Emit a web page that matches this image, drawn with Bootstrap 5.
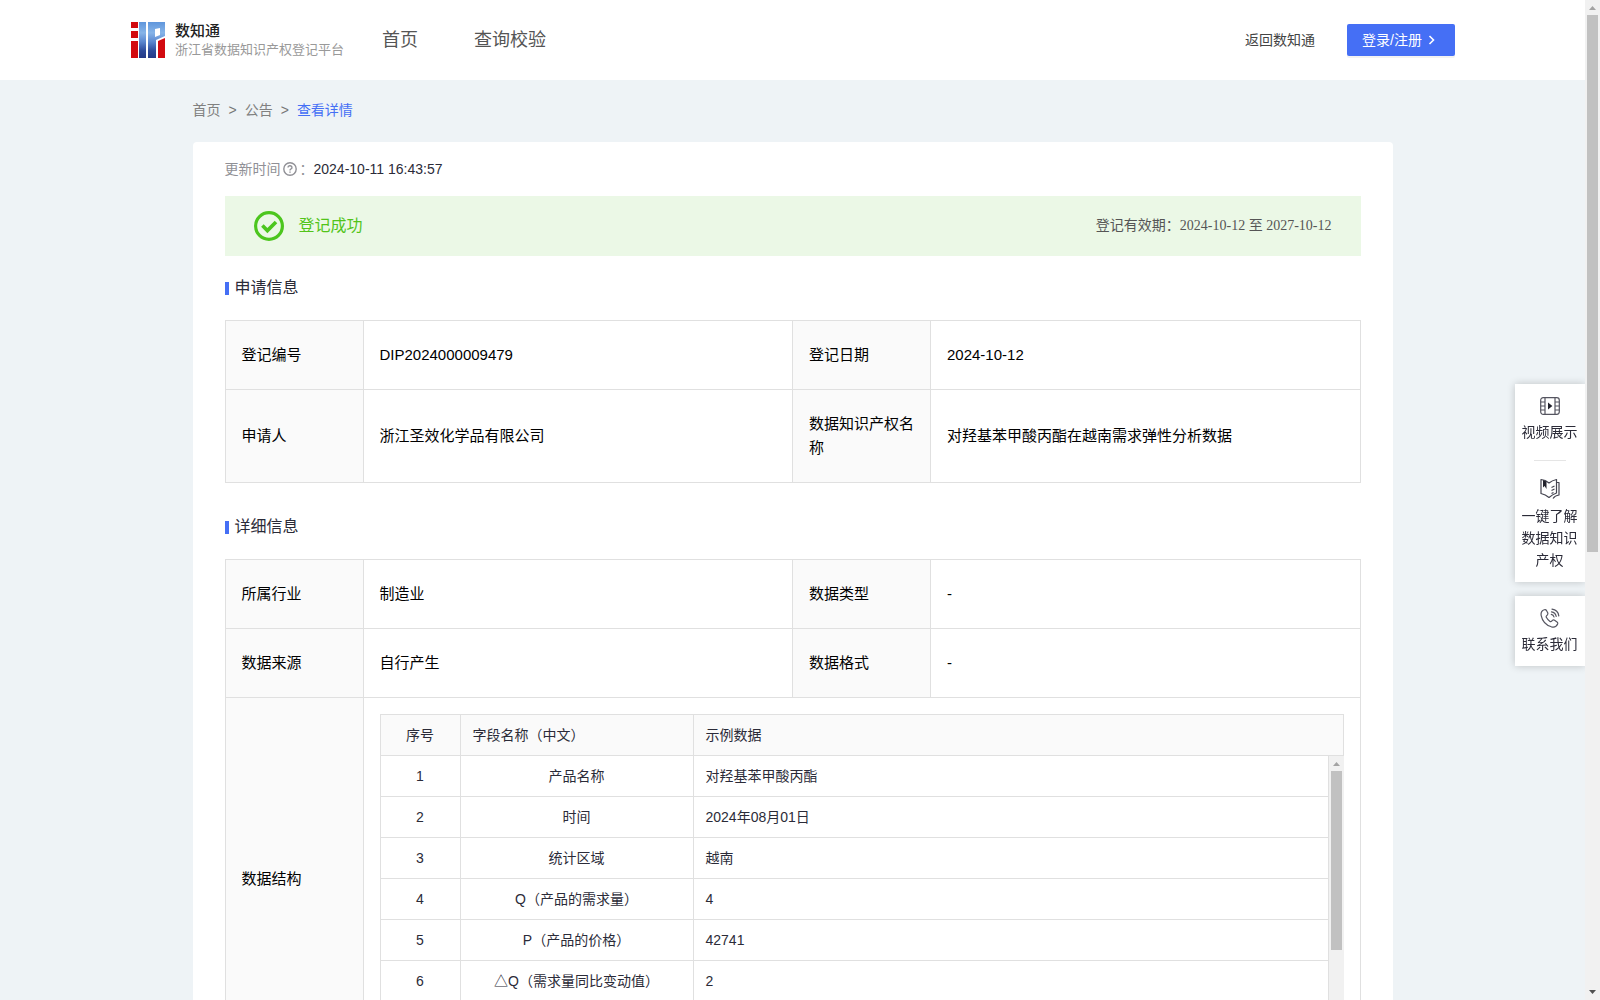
<!DOCTYPE html>
<html lang="zh-CN">
<head>
<meta charset="utf-8">
<meta name="viewport" content="width=device-width, initial-scale=1">
<title>数知通 - 浙江省数据知识产权登记平台</title>
<link href="https://cdn.jsdelivr.net/npm/bootstrap@5.3.0/dist/css/bootstrap.min.css" rel="stylesheet">
<style>
  :root { --brand: #456ff5; --line: #e0e0e0; --ink: #2b2b38; }
  body { font-family: "Liberation Sans", "Noto Sans CJK SC", sans-serif; font-size: 14px; line-height: 22px; color: var(--ink); background: #eef3f6; }
  a { text-decoration: none; }
  .page-pane { min-width: 0; }
  .site-header { height: 80px; padding: 0 130px; }
  .brand-text { margin-left: 9px; }
  .brand-name { font-size: 15px; line-height: 20px; color: #222; font-weight: 500; }
  .brand-sub { font-size: 13px; line-height: 18px; color: #999; }
  .site-nav { gap: 56px; margin-left: 38px; }
  .site-nav a { font-size: 18px; color: #555; }
  .back-link { color: #444; }
  .btn-login { height: 32px; padding: 0 19px 0 15px; gap: 6px; background: var(--brand); color: #fff; font-size: 14px; line-height: 22px; border: 0; border-radius: 2px; box-shadow: 0 2px 0 rgba(0,0,0,.05); }
  .btn-login:hover { background: #3560e8; color: #fff; }
  .content-wrap { max-width: 1200px; }
  .crumbs { --bs-breadcrumb-divider: '>'; --bs-breadcrumb-item-padding-x: 8px; --bs-breadcrumb-divider-color: #777; font-size: 14px; padding: 19px 0 21px; }
  .crumbs a { color: #808080; }
  .crumbs .active { color: var(--brand); }
  .detail-sheet { border-radius: 4px; padding: 16px 32px; }
  .muted-label { color: #909096; }
  .help-icon { margin: 0 3px 0 2px; }
  .result-bar { height: 60px; margin-top: 16px; padding: 0 29px; background: #ebf8e6; }
  .result-text { font-size: 16px; color: #52c41a; margin-left: 15px; }
  .valid-text { color: #555; font-family: "Liberation Serif", "Noto Sans CJK SC", serif; }
  .sect-title { font-size: 16px; line-height: 24px; margin: 20px 0; font-weight: 400; gap: 6px; }
  .sect-title::before { content: ""; width: 4px; height: 13px; background: var(--brand); }
  .info-table { width: 100%; table-layout: fixed; border-collapse: collapse; margin-bottom: 32px; font-size: 15px; line-height: 24px; color: #000; }
  .info-table > tbody > tr > th, .info-table > tbody > tr > td { border: 1px solid var(--line); padding: 22px 16px; vertical-align: middle; font-weight: 400; }
  .info-table > tbody > tr > th { background: #fafafa; }
  .info-table > tbody > tr > td.nest-cell { padding: 16px; }
  .key-col { width: 138px; }
  .field-table { width: 100%; table-layout: fixed; border-collapse: collapse; font-size: 14px; line-height: 22px; color: var(--ink); }
  .field-table th, .field-table td { border: 1px solid var(--line); padding: 9px 12px; font-weight: 400; }
  .field-table th { background: #fafafa; }
  .field-body { height: 288px; }
  .field-body tr:first-child td { border-top: 0; }
  .no-col { width: 80px; }
  .name-col { width: 233px; }
  .bar-track { width: 15px; background: #f1f1f1; padding: 6px 2px; flex: none; }
  .bar-thumb { background: #c1c1c1; margin-top: 5px; }
  .page-thumb { height: 537px; }
  .field-thumb { height: 179px; }
  .bar-track svg { display: block; margin: 0 auto; }
  .side-dock { position: fixed; right: 15px; top: 384px; width: 70px; display: flex; flex-direction: column; gap: 14px; clip-path: inset(-12px 0 -12px -12px); }
  .dock-box { background: #fff; box-shadow: 0 0 8px rgba(0,0,0,.2); padding: 12px 7px 11px 6px; }
  .dock-box a { color: var(--ink); display: flex; flex-direction: column; align-items: center; gap: 5px; text-align: center; }
  .dock-box hr { width: 32px; margin: 17px auto; border-color: #999; }
</style>
<script src="https://cdn.jsdelivr.net/npm/bootstrap@5.3.0/dist/js/bootstrap.bundle.min.js"></script>
</head>
<body>
<div class="d-flex vh-100 overflow-hidden">
  <div class="page-pane flex-grow-1 overflow-hidden">
    <header class="site-header bg-white d-flex align-items-center">
      <a href="#" class="d-flex align-items-center">
        <svg width="36" height="38" viewBox="0 0 36 38" aria-hidden="true">
          <defs><linearGradient id="lg" gradientUnits="userSpaceOnUse" x1="0" y1="1" x2="0" y2="37"><stop offset="0" stop-color="#5f96dc"/><stop offset=".3" stop-color="#86b4e8"/><stop offset=".55" stop-color="#5a86cf"/><stop offset=".8" stop-color="#2d4a9a"/><stop offset="1" stop-color="#253a86"/></linearGradient></defs>
          <path fill="#d20a10" d="M1 1h7v6H1zM1 10h7v7H1zM1 20h7v17H1zM28 20l7-3v20h-7z"/>
          <path fill="url(#lg)" d="M9 1h7v36H9z"/>
          <path fill="url(#lg)" fill-rule="evenodd" d="M18 1h17v14l-9 4v18h-8zM25 8v8l5-2V7z"/>
        </svg>
        <span class="brand-text d-flex flex-column">
          <span class="brand-name">数知通</span>
          <span class="brand-sub">浙江省数据知识产权登记平台</span>
        </span>
      </a>
      <nav class="site-nav d-flex">
        <a href="#">首页</a>
        <a href="#">查询校验</a>
      </nav>
      <a href="#" class="back-link ms-auto me-3 pe-3">返回数知通</a>
      <button type="button" class="btn btn-login d-flex align-items-center">登录/注册
        <svg width="8" height="10" viewBox="0 0 8 10" fill="none" stroke="#fff" stroke-width="1.6" aria-hidden="true"><path d="M1.5 1l4 4-4 4"/></svg>
      </button>
    </header>

    <main class="content-wrap mx-auto">
      <nav aria-label="breadcrumb">
        <ol class="breadcrumb crumbs mb-0">
          <li class="breadcrumb-item"><a href="#">首页</a></li>
          <li class="breadcrumb-item"><a href="#">公告</a></li>
          <li class="breadcrumb-item active" aria-current="page">查看详情</li>
        </ol>
      </nav>

      <section class="detail-sheet bg-white">
        <div class="d-flex align-items-center">
          <span class="muted-label">更新时间</span>
          <svg class="help-icon" width="14" height="14" viewBox="0 0 14 14" fill="none" stroke="#909096" stroke-width="1.4" aria-hidden="true"><circle cx="7" cy="7" r="6.2"/><path d="M5 5.6a2 1.8 0 1 1 2.8 1.6q-.8.4-.8 1.2M7 9.6v1.2"/></svg>
          <span class="muted-label">：</span>
          <span>2024-10-11 16:43:57</span>
        </div>

        <div class="result-bar d-flex align-items-center">
          <svg width="30" height="30" viewBox="0 0 30 30" fill="none" stroke="#4cc61e" aria-hidden="true"><circle cx="15" cy="15" r="13.4" stroke-width="3.2"/><path d="M8.4 14.6l5 5 8.6-8.6" stroke-width="3.6"/></svg>
          <span class="result-text">登记成功</span>
          <span class="valid-text ms-auto">登记有效期：2024-10-12 至 2027-10-12</span>
        </div>

        <h2 class="sect-title d-flex align-items-center">申请信息</h2>
        <table class="info-table">
          <colgroup><col class="key-col"><col><col class="key-col"><col></colgroup>
          <tbody>
            <tr><th scope="row">登记编号</th><td>DIP2024000009479</td><th scope="row">登记日期</th><td>2024-10-12</td></tr>
            <tr><th scope="row">申请人</th><td>浙江圣效化学品有限公司</td><th scope="row">数据知识产权名称</th><td>对羟基苯甲酸丙酯在越南需求弹性分析数据</td></tr>
          </tbody>
        </table>

        <h2 class="sect-title d-flex align-items-center">详细信息</h2>
        <table class="info-table">
          <colgroup><col class="key-col"><col><col class="key-col"><col></colgroup>
          <tbody>
            <tr><th scope="row">所属行业</th><td>制造业</td><th scope="row">数据类型</th><td>-</td></tr>
            <tr><th scope="row">数据来源</th><td>自行产生</td><th scope="row">数据格式</th><td>-</td></tr>
            <tr>
              <th scope="row">数据结构</th>
              <td colspan="3" class="nest-cell">
                <table class="field-table">
                  <colgroup><col class="no-col"><col class="name-col"><col></colgroup>
                  <thead><tr><th scope="col" class="text-center">序号</th><th scope="col">字段名称（中文）</th><th scope="col">示例数据</th></tr></thead>
                </table>
                <div class="field-body d-flex overflow-hidden">
                  <div class="flex-grow-1">
                    <table class="field-table">
                      <colgroup><col class="no-col"><col class="name-col"><col></colgroup>
                      <tbody>
                        <tr><td class="text-center">1</td><td class="text-center">产品名称</td><td>对羟基苯甲酸丙酯</td></tr>
                        <tr><td class="text-center">2</td><td class="text-center">时间</td><td>2024年08月01日</td></tr>
                        <tr><td class="text-center">3</td><td class="text-center">统计区域</td><td>越南</td></tr>
                        <tr><td class="text-center">4</td><td class="text-center">Q（产品的需求量）</td><td>4</td></tr>
                        <tr><td class="text-center">5</td><td class="text-center">P（产品的价格）</td><td>42741</td></tr>
                        <tr><td class="text-center">6</td><td class="text-center">△Q（需求量同比变动值）</td><td>2</td></tr>
                      </tbody>
                    </table>
                  </div>
                  <div class="bar-track" aria-hidden="true">
                    <svg width="7" height="4" viewBox="0 0 7 4" fill="#a3a3a3"><path d="M0 4L3.5 0 7 4z"/></svg>
                    <div class="bar-thumb field-thumb"></div>
                  </div>
                </div>
              </td>
            </tr>
          </tbody>
        </table>
      </section>
    </main>
  </div>

  <div class="bar-track d-flex flex-column" aria-hidden="true">
    <svg width="7" height="4" viewBox="0 0 7 4" fill="#a3a3a3"><path d="M0 4L3.5 0 7 4z"/></svg>
    <div class="bar-thumb page-thumb"></div>
    <svg class="mt-auto" width="7" height="4" viewBox="0 0 7 4" fill="#505050"><path d="M0 0h7L3.5 4z"/></svg>
  </div>
</div>

<aside class="side-dock">
  <div class="dock-box">
    <a href="#">
      <svg width="20" height="20" viewBox="0 0 20 20" fill="none" stroke="#555560" stroke-width="1.2" aria-hidden="true"><rect x=".7" y="1.7" width="18.6" height="16.6" rx="2.5"/><path d="M5 1.7v16.6M15 1.7v16.6M.7 6H5M.7 10H5M.7 14H5M15 6h4.3M15 10h4.3M15 14h4.3"/><path d="M8 6.6l4.4 3.4L8 13.4z" fill="#22222c" stroke="none"/></svg>
      <span>视频展示</span>
    </a>
    <hr>
    <a href="#">
      <svg width="20" height="22" viewBox="0 0 20 22" fill="none" stroke="#444450" stroke-width="1.2" stroke-linejoin="round" aria-hidden="true"><path d="M1 1.5q4.500.3 8 3.500Q12 2.500 16.500 1.500V15q-4 1.500-7.500 4.500Q5.500 16.500 1 15.500zM16.500 4.500h2.500V17q-4 .5-6 3.500M11.500 9.500l3-1.500M11.500 12.500l3-1.500M11.500 15.500l2-1"/><path d="M3 2v7.500l1.600-1.500 1.900 3V3.500z" fill="#22222c" stroke="none"/></svg>
      <span>一键了解数据知识产权</span>
    </a>
  </div>
  <div class="dock-box">
    <a href="#">
      <svg width="20" height="20" viewBox="0 0 20 20" fill="none" stroke="#555560" stroke-width="1.2" stroke-linecap="round" stroke-linejoin="round" aria-hidden="true"><path d="M4.300 1.800C2 2.600.7 5 1.200 7.600c1 5 5 9.600 10.200 11.200 2.600.7 5.200-.4 6.200-2.800.3-.8 0-1.600-.6-2.100l-2.400-1.700c-.7-.5-1.600-.4-2.200.2l-.9.9c-.5.4-1 .4-1.500.1-1.500-1-2.800-2.400-3.700-4.100-.3-.5-.2-1 .2-1.500l.9-1c.5-.6.6-1.300.3-2L6.600 2.700c-.4-.8-1.400-1.200-2.300-.9z"/><path d="M11.500 3.800c2.500.4 4.200 2 4.700 4.500M11.300 6.300c1.500.3 2.400 1.200 2.700 2.700M12 1.200c3.800.5 6.300 3 6.800 6.600"/></svg>
      <span>联系我们</span>
    </a>
  </div>
</aside>
</body>
</html>
